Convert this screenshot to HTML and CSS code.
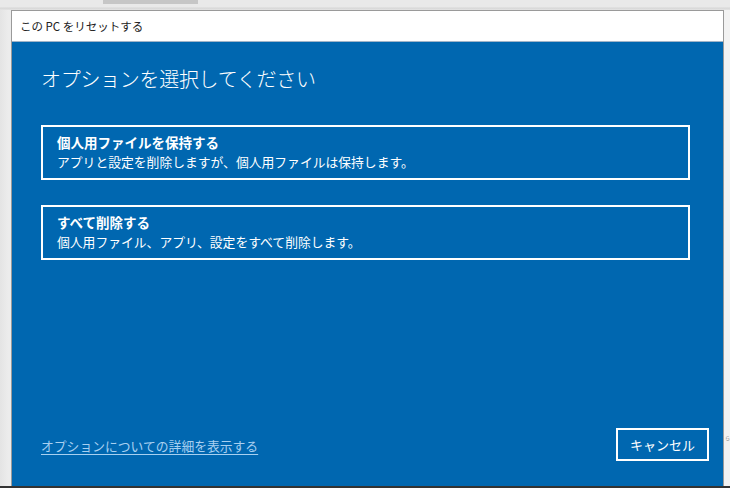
FILE: index.html
```html
<!DOCTYPE html>
<html lang="ja">
<head>
  <meta charset="UTF-8">
  <link rel="stylesheet" href="styles.css">
  <title>この PC をリセットする</title>
</head>
<body>

<div class="topstrip">
  <div class="tab"></div>
</div>

<div class="main">
  <div class="window">
    <div class="titlebar">この PC をリセットする</div>
    <div class="content">
      <h1>オプションを選択してください</h1>

      <div class="option">
        <div class="option-title">個人用ファイルを保持する</div>
        <div class="option-desc">アプリと設定を削除しますが、個人用ファイルは保持します。</div>
      </div>

      <div class="option">
        <div class="option-title">すべて削除する</div>
        <div class="option-desc">個人用ファイル、アプリ、設定をすべて削除します。</div>
      </div>

      <div class="footer">
        <a class="more" href="#">オプションについての詳細を表示する</a>
        <button class="cancel">キャンセル</button>
      </div>
    </div>
  </div>
  <div class="behind">ら</div>
</div>

<div class="taskbar"></div>

</body>
</html>
```

FILE: styles.css
```css
body {
  margin: 0;
  width: 730px;
  height: 488px;
  overflow: hidden;
  background: #eeeeee;
  font-family: "Noto Sans CJK JP", "Noto Sans", sans-serif;
}

.topstrip {
  height: 10px;
  background: linear-gradient(#e9e9e9, #e9e9e9 7px, #d6d6d6 8px, #e4e4e4);
  position: relative;
}

.tab {
  position: absolute;
  left: 103px;
  top: 0;
  width: 95px;
  height: 4px;
  background: #c6c6c6;
}

.main {
  display: flex;
  height: 476px;
  background: linear-gradient(90deg, #e4e4e4, #ececec 8px, #f2f2f2);
}

.window {
  flex: none;
  margin-left: 11px;
  width: 711px;
  display: flex;
  flex-direction: column;
  border: 1px solid #9a9a9a;
  border-bottom: none;
  background: #0067b0;
}

.titlebar {
  height: 30px;
  flex: none;
  background: #ffffff;
  border-bottom: 1px solid #a0b4c8;
  padding-left: 8px;
  font-size: 11.5px;
  line-height: 30px;
  color: #222;
}

.content {
  flex: 1;
  display: flex;
  flex-direction: column;
  padding: 20px 33px 25px 29px;
  color: #ffffff;
}

h1 {
  margin: 0 0 29px;
  font-size: 20px;
  font-weight: 300;
  line-height: 34px;
  letter-spacing: -0.3px;
}

.option {
  border: 2px solid #ffffff;
  padding: 6px 0 0 14px;
  box-sizing: border-box;
  height: 55px;
  margin-bottom: 25px;
}

.option-title {
  font-size: 13.5px;
  font-weight: bold;
  line-height: 18px;
}

.option-desc {
  font-size: 12.8px;
  line-height: 21px;
}

.footer {
  margin-top: auto;
  display: flex;
  justify-content: space-between;
  align-items: center;
}

.more {
  color: #a8d0f0;
  font-size: 12.8px;
  text-decoration: underline;
  text-underline-offset: 3px;
  margin-top: 1px;
}

.cancel {
  width: 93px;
  height: 33px;
  margin-right: -19px;
  background: transparent;
  border: 2px solid #ffffff;
  color: #ffffff;
  font-family: inherit;
  font-size: 13px;
}

.behind {
  min-width: 0;
  margin: 424px 0 0 1px;
  font-size: 5px;
  line-height: 8px;
  color: #777;
}

.taskbar {
  height: 2px;
  background: #333;
}
```
